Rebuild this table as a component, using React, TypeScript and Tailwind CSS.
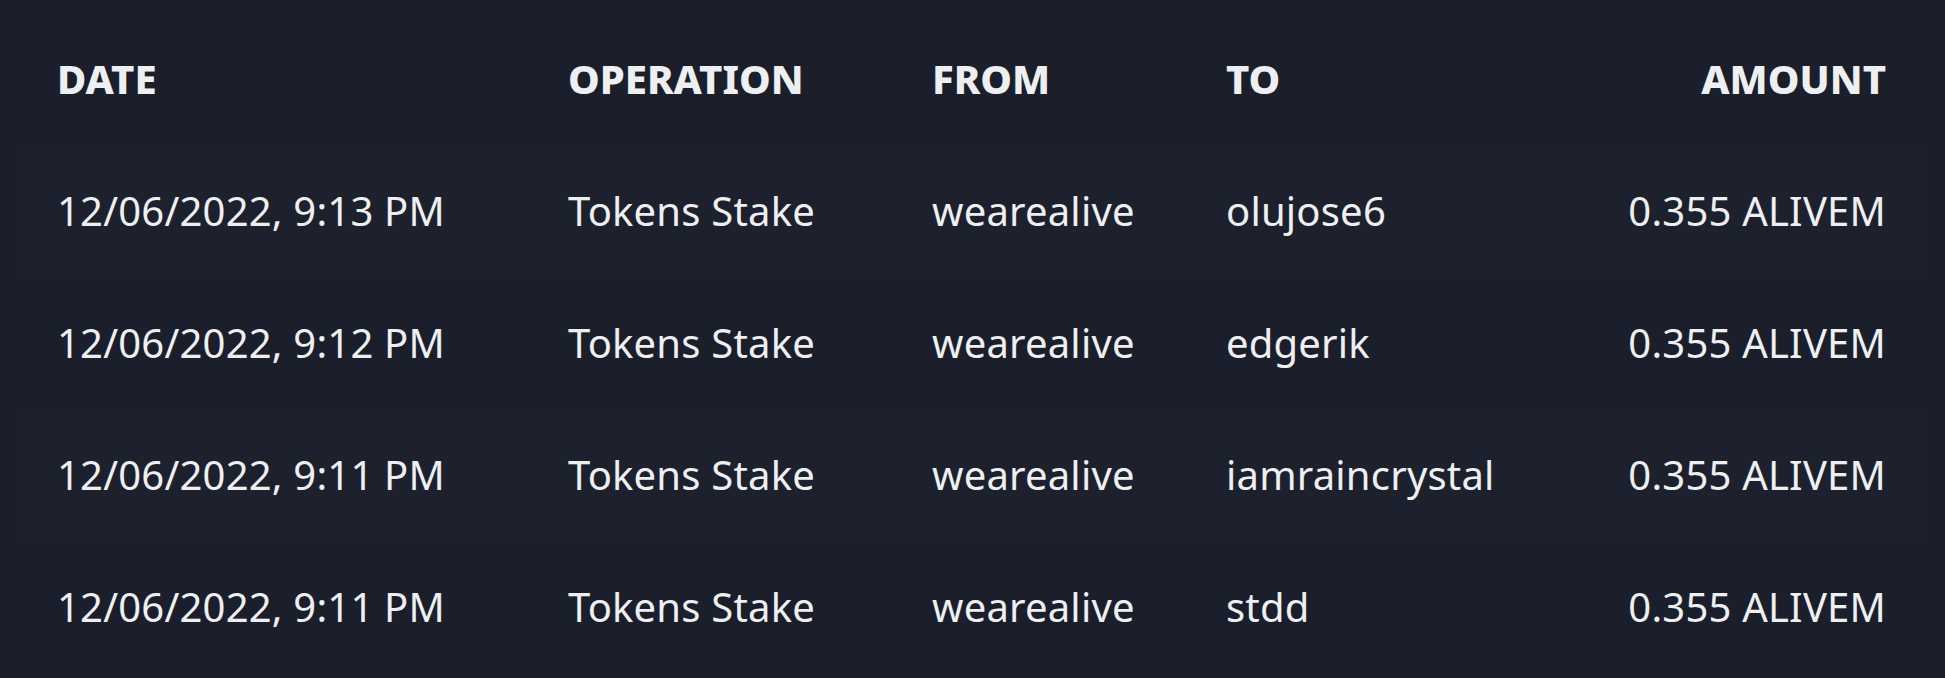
import React from "react";

const rows = [
  { date: "12/06/2022, 9:13 PM", op: "Tokens Stake", from: "wearealive", to: "olujose6", amount: "0.355 ALIVEM" },
  { date: "12/06/2022, 9:12 PM", op: "Tokens Stake", from: "wearealive", to: "edgerik", amount: "0.355 ALIVEM" },
  { date: "12/06/2022, 9:11 PM", op: "Tokens Stake", from: "wearealive", to: "iamraincrystal", amount: "0.355 ALIVEM" },
  { date: "12/06/2022, 9:11 PM", op: "Tokens Stake", from: "wearealive", to: "stdd", amount: "0.355 ALIVEM" },
];

export default function App() {
  return (
    <div
      className="w-full h-[678px] overflow-hidden bg-[#1b1f2b] text-[#eeeff1] pt-[14px] pl-[22px] pr-[24px]"
      style={{ fontFamily: '"Noto Sans", "Open Sans", sans-serif' }}
    >
      <div className="grid grid-cols-[511px_364px_294px_1fr_auto] items-center h-[132px] px-[35px] pb-[3px] text-[40px] font-extrabold leading-none">
        <div>DATE</div>
        <div>OPERATION</div>
        <div>FROM</div>
        <div>TO</div>
        <div className="text-right">AMOUNT</div>
      </div>
      {rows.map((r, i) => (
        <div
          key={i}
          className={
            i % 2 === 0
              ? "grid grid-cols-[511px_364px_294px_1fr_auto] items-center h-[132px] px-[35px] pb-[3px] text-[40px] leading-none tracking-[0.2px] bg-[#1d212d]"
              : "grid grid-cols-[511px_364px_294px_1fr_auto] items-center h-[132px] px-[35px] pb-[3px] text-[40px] leading-none tracking-[0.2px]"
          }
        >
          <div>{r.date}</div>
          <div>{r.op}</div>
          <div>{r.from}</div>
          <div>{r.to}</div>
          <div className="text-right">{r.amount}</div>
        </div>
      ))}
    </div>
  );
}
